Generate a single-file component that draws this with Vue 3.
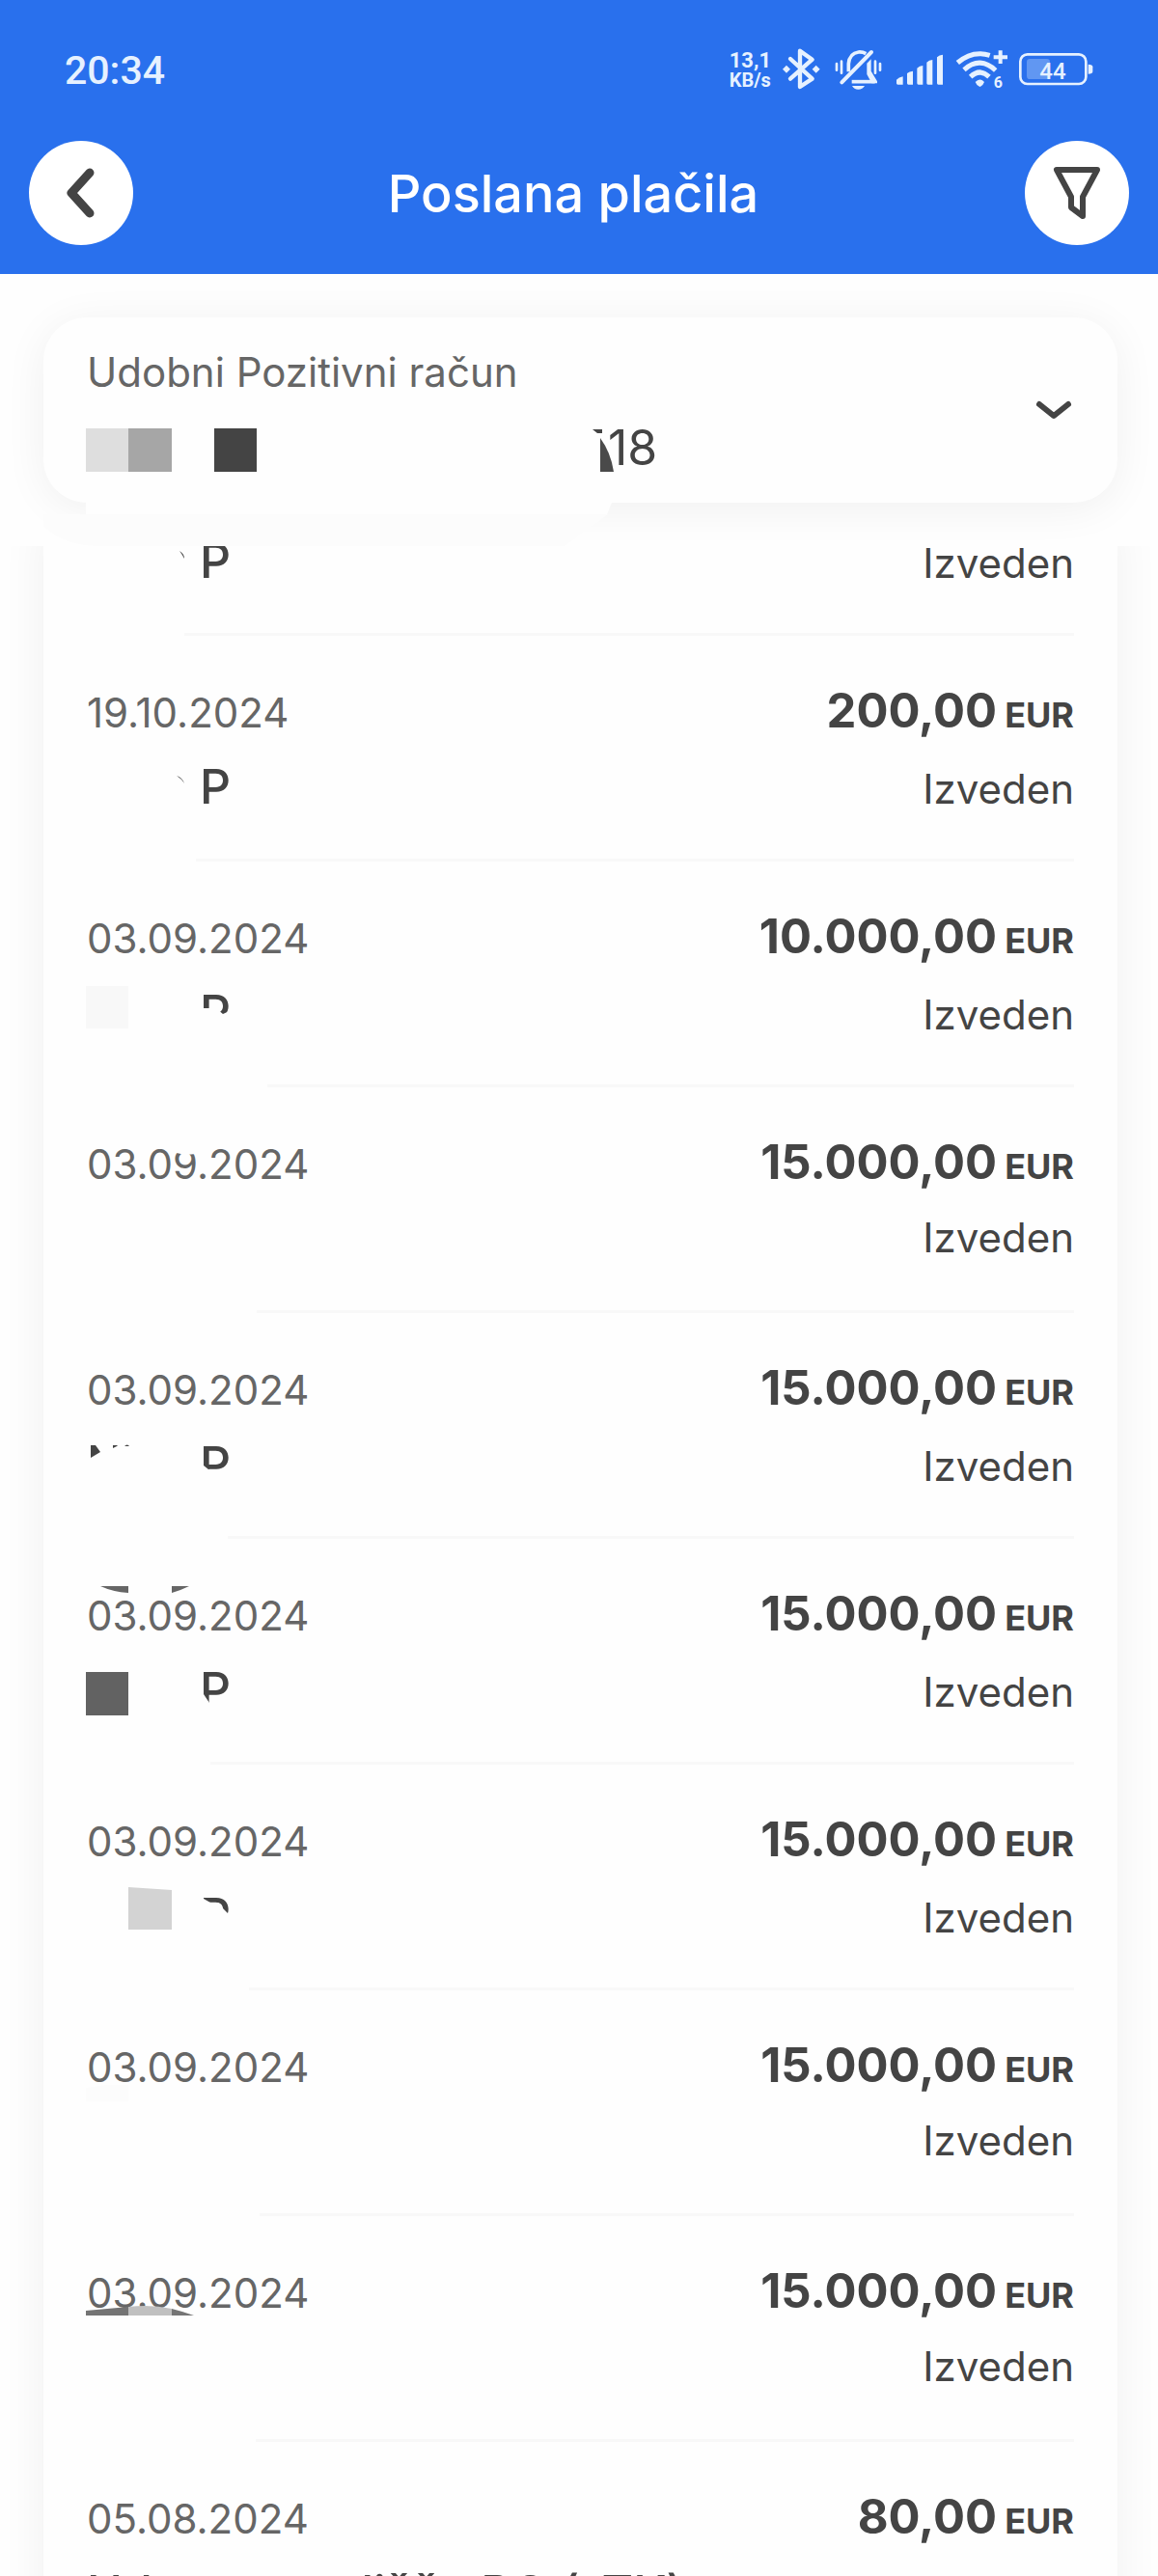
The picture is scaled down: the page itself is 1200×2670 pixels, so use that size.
<script setup>
const DARK = '#444444'

// indent: where the divider starts; shapes: drawn over the text of the entry
const payments = [
  { partial: true, name: 'P', status: 'Izveden', indent: 101,
    shapes: [{ d: 'M96 30Q101 33 101 38Q99 34 96 30Z', fill: DARK }] },
  { date: '19.10.2024', name: 'P', amount: '200,00', status: 'Izveden', indent: 113,
    shapes: [{ d: 'M93 145Q99 147 101 153Q98 148 93 145Z', fill: DARK }] },
  { date: '03.09.2024', name: 'P', amount: '10.000,00', status: 'Izveden', indent: 187,
    shapes: [
      { d: 'M-1 129H43V173H-1Z', fill: '#f8f8f8' },
      { d: 'M116 152H134L141 158L150 154V177H116Z', fill: '#fefefe' },
    ] },
  { date: '03.09.2024', name: '', amount: '15.000,00', status: 'Izveden', indent: 176,
    shapes: [{ d: 'M93 62H112V69Q102 71 93 68Z', fill: '#fefefe' }] },
  { date: '03.09.2024', name: 'P', amount: '15.000,00', status: 'Izveden', indent: 146,
    shapes: [
      { d: 'M4 137H9L14 144L4 150Z', fill: DARK },
      { d: 'M27 137H32L31 138L27 140Z', fill: DARK },
      { d: 'M39 138Q42 135 44 138Z', fill: DARK },
      { d: 'M116 158H121L126 162H150V177H116Z', fill: '#fefefe' },
    ] },
  { date: '03.09.2024', name: 'P', amount: '15.000,00', status: 'Izveden', indent: 128,
    shapes: [
      { d: 'M14 49H43V56Q27 55 14 49Z', fill: '#666666' },
      { d: 'M88 49H106L97 53L88 56Z', fill: '#666666' },
      { d: 'M-1 138H43V183H-1Z', fill: '#626262' },
      { d: 'M116 159L121 161L127 170H150V177H116Z', fill: '#fefefe' },
    ] },
  { date: '03.09.2024', name: 'P', amount: '15.000,00', status: 'Izveden', indent: 168,
    shapes: [
      { d: 'M43 127L88 130V171H43Z', fill: '#d3d3d3' },
      { d: 'M116 137L121 139L128 143H135Q139 144 141 149L146 154H150V177H116Z', fill: '#fefefe' },
    ] },
  { date: '03.09.2024', name: '', amount: '15.000,00', status: 'Izveden', indent: 179,
    shapes: [{ d: 'M-1 101L20 98H43V115H-1Z', fill: '#fcfcfc' }] },
  { date: '03.09.2024', name: '', amount: '15.000,00', status: 'Izveden', indent: 175,
    shapes: [
      { d: 'M-1 98L43 94V103H-1Z', fill: '#747474' },
      { d: 'M43 94Q66 91 88 96V103H43Z', fill: '#c0c0c0' },
      { d: 'M88 96Q100 99 111 103H88Z', fill: '#757575' },
    ] },
  { date: '05.08.2024', name: 'Udmovaovališče PO (sTK)', wide: true, amount: '80,00', status: 'Izveden', indent: 0, shapes: [] },
]
</script>

<template>
  <div class="screen">
    <header class="header">
      <div class="status-bar">
        <span class="clock">20:34</span>
        <div class="indicators">
          <div class="speed"><span class="rate">13,1</span><span class="unit">KB/s</span></div>
          <svg width="39" height="46" viewBox="212 60 117 138" aria-hidden="true">
            <path d="M236 93L304 155L266 180V68L304 95L236 155" fill="none" stroke="currentColor" stroke-width="13" stroke-linejoin="round" stroke-linecap="round" />
            <path d="M224 113L236 125L224 137L212 125ZM316 113L328 125L316 137L304 125Z" fill="currentColor" />
          </svg>
          <svg width="52" height="46" viewBox="366 60 156 138" aria-hidden="true">
            <g fill="none" stroke="currentColor" stroke-linecap="round">
              <path d="M397 166L489 72" stroke-width="12" />
              <path d="M418 133V108Q421 76 449 72Q462 71 472 77" stroke-width="11" stroke-linecap="butt" />
              <path d="M428 164H500" stroke-width="11" stroke-linecap="butt" />
              <path d="M381 108V128M396 101V137M501 101V137M516 108V128" stroke-width="8" />
            </g>
            <path d="M488 94V131L507 163V169H490L475 141V107Z" fill="currentColor" />
            <path d="M429 177H468Q462 188 448 188Q435 188 429 177Z" fill="currentColor" />
          </svg>
          <svg width="51" height="46" viewBox="558 60 153 138" aria-hidden="true">
            <path d="M567 158Q574 150 587 148V173H571Q567 173 567 169ZM600 138Q607 132 618 131V173H604Q600 173 600 169ZM631 122Q638 115 649 114V173H635Q631 173 631 169ZM661 104Q668 97 679 96V173H665Q661 173 661 169ZM693 88Q700 81 711 80V173H697Q693 173 693 169Z" fill="currentColor" />
          </svg>
          <svg width="55" height="46" viewBox="747 60 165 138" aria-hidden="true">
            <g fill="none" stroke="currentColor">
              <path d="M757 105Q803 65 857 82" stroke-width="15" />
              <path d="M777 127Q826 83 875 129" stroke-width="15" />
              <path d="M797 149Q826 121 855 149" stroke-width="15" />
              <path d="M890 67V108M869 88H912" stroke-width="12" />
            </g>
            <path d="M812 165Q826 150 840 165Q836 176 826 180Q816 176 812 165Z" fill="currentColor" />
            <text x="869" y="183" class="wifi-gen">6</text>
          </svg>
          <svg width="77" height="46" viewBox="948 60 231 138" aria-hidden="true">
            <rect x="952" y="79" width="204" height="92" rx="22" fill="none" stroke="currentColor" stroke-width="8" />
            <rect x="972" y="93" width="72" height="63" rx="10" fill="currentColor" opacity="0.3" />
            <path d="M1163 110Q1177 110 1177 118V132Q1177 140 1163 140Z" fill="currentColor" />
            <text x="1053" y="156" text-anchor="middle" class="battery-level">44</text>
          </svg>
        </div>
      </div>
      <div class="nav">
        <button class="round" type="button" aria-label="Nazaj">
          <svg width="108" height="108" viewBox="0 0 108 108" aria-hidden="true">
            <path d="M63 33L44 54L63 75" fill="none" stroke="#444" stroke-width="9" stroke-linecap="round" stroke-linejoin="round" />
          </svg>
        </button>
        <h1 class="title">Poslana plačila</h1>
        <button class="round" type="button" aria-label="Filter">
          <svg width="108" height="108" viewBox="0 0 108 108" aria-hidden="true">
            <path d="M33 30H75L60 58V78L48 69V58Z" fill="none" stroke="#444" stroke-width="6" stroke-linejoin="round" />
          </svg>
        </button>
      </div>
    </header>

    <section class="account">
      <button class="selector" type="button">
        <svg class="veil" width="600" height="48" viewBox="0 0 600 48" aria-hidden="true">
          <path d="M0 12H585L540 45H60Q20 45 0 24Z" fill="#fcfcfc" />
          <path d="M44 0H589L584 12H44Z" fill="#fefefe" />
        </svg>
        <span class="account-text">
          <span class="account-name">Udobni Pozitivni račun</span>
          <span class="account-number">
            <svg width="540" height="78" viewBox="0 0 540 78" aria-hidden="true">
              <path d="M-1 19H43V64H-1Z" fill="#dedede" />
              <path d="M43 19H88V64H43Z" fill="#a6a6a6" />
              <path d="M132 19H176V64H132Z" fill="#444" />
              <path d="M524 20H534V24H529Z" fill="#444" />
              <path d="M532 29Q543 44 546 64H532Z" fill="#4a4a4a" />
            </svg>
            <span>18</span>
          </span>
        </span>
        <svg width="36" height="18" viewBox="0 0 36 18" aria-hidden="true">
          <path d="M3 3L18 15L33 3" fill="none" stroke="#444" stroke-width="6" stroke-linecap="round" stroke-linejoin="round" />
        </svg>
      </button>
    </section>

    <main class="scroll">
      <ul class="list">
        <li v-for="(p, i) in payments" :key="i" class="payment" :class="{ partial: p.partial }">
          <div v-if="!p.partial" class="line">
            <time class="date">{{ p.date }}</time>
            <span class="amount">{{ p.amount }}<small class="currency">EUR</small></span>
          </div>
          <div class="line">
            <span class="name" :class="{ wide: p.wide }">{{ p.name }}</span>
            <span class="state">{{ p.status }}</span>
          </div>
          <svg class="shapes" width="240" height="200" viewBox="0 0 240 200" aria-hidden="true">
            <path v-for="(s, k) in p.shapes" :key="k" :d="s.d" :fill="s.fill" />
          </svg>
          <div class="divider" :style="{ marginLeft: p.indent + 'px' }"></div>
        </li>
      </ul>
    </main>
  </div>
</template>

<style>
body {
  background: #fefefe;
}
</style>

<style scoped>
.screen {
  display: flex;
  flex-direction: column;
  height: 100vh;
  overflow: hidden;
  background: #fefefe;
  color: #444;
  font-family: Inter, "Liberation Sans", sans-serif;
}

svg {
  display: block;
  flex: none;
  overflow: visible;
}

button {
  margin: 0;
  padding: 0;
  border: 0;
  color: inherit;
  font: inherit;
  text-align: left;
  cursor: pointer;
}

.header {
  position: relative;
  z-index: 2;
  flex: none;
  background: #2970ed;
  color: #fff;
}

.status-bar {
  display: flex;
  align-items: center;
  justify-content: space-between;
  height: 146px;
  padding: 0 67px;
  color: #e6f1ff;
  font-family: Roboto, sans-serif;
}

.clock {
  font-size: 41px;
  font-weight: 500;
}

.indicators {
  display: flex;
  align-items: center;
  gap: 12px;
}

.speed {
  display: flex;
  flex-direction: column;
  font-weight: 700;
  line-height: 20px;
}

.rate {
  font-size: 22px;
}

.unit {
  font-size: 20px;
}

.wifi-gen {
  fill: currentColor;
  font-size: 48px;
  font-weight: 700;
}

.battery-level {
  fill: currentColor;
  font-size: 72px;
  font-weight: 500;
}

.nav {
  display: flex;
  align-items: center;
  justify-content: space-between;
  padding: 0 30px 30px;
}

.round {
  flex: none;
  width: 108px;
  height: 108px;
  border-radius: 50%;
  background: #fff;
}

.title {
  margin: 0;
  padding-right: 12px;
  font-size: 54px;
  font-weight: 500;
}

.account {
  position: relative;
  z-index: 1;
  flex: none;
  padding: 45px 42px 45px 45px;
}

.selector {
  position: relative;
  display: flex;
  align-items: center;
  justify-content: space-between;
  width: 100%;
  padding: 18px 48px 18px 45px;
  border-radius: 45px;
  background: #fefefe;
  box-shadow: 0 6px 45px rgba(0, 0, 0, 0.06);
}

.veil {
  position: absolute;
  top: 100%;
  left: 0;
}

.account-text {
  display: flex;
  flex-direction: column;
  line-height: 78px;
}

.account-name {
  color: #666;
  font-size: 42px;
}

.account-number {
  display: flex;
  font-size: 50px;
}

.scroll {
  flex: 1;
  min-height: 0;
  overflow: hidden;
}

.list {
  margin: -25px 42px 0 45px;
  padding: 0 45px;
  list-style: none;
  background: #fefefe;
  box-shadow: 0 0 45px rgba(0, 0, 0, 0.06);
}

.payment {
  position: relative;
  padding-top: 39px;
}

.payment.partial {
  padding-top: 1px;
}

.line {
  display: flex;
  align-items: baseline;
  justify-content: space-between;
  height: 78px;
  line-height: 78px;
  white-space: nowrap;
}

.date {
  color: #666;
  font-size: 42px;
}

.amount {
  display: flex;
  align-items: baseline;
  gap: 8px;
  font-size: 49px;
  font-weight: 700;
}

.currency {
  font-size: 36px;
}

.name {
  padding-left: 117px;
  font-size: 50px;
  font-weight: 500;
}

.name.wide {
  padding-left: 0;
}

.state {
  font-size: 42px;
}

.shapes {
  position: absolute;
  top: 0;
  left: 0;
}

.divider {
  height: 3px;
  margin-top: 36px;
  background: #f8f8f8;
}
</style>
